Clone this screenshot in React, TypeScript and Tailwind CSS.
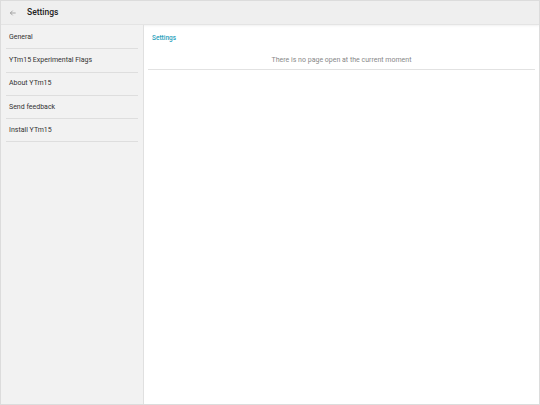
import React from 'react';

const items = ['General', 'YTm15 Experimental Flags', 'About YTm15', 'Send feedback', 'Install YTm15'];

const App = () => {
  return (
    <div className="w-[540px] h-[405px] flex flex-col border border-[#dcdcdc] bg-white overflow-hidden" style={{ fontFamily: 'Roboto, "Liberation Sans", sans-serif' }}>
      {/* header */}
      <div className="h-[24px] flex-shrink-0 flex items-center bg-[#efefef] border-b border-[#e4e4e4] shadow-[0_1px_2px_rgba(0,0,0,0.06)]">
        <svg width="8" height="8" viewBox="0 0 24 24" className="ml-[8px] text-[#777]" fill="none" stroke="currentColor" strokeWidth="1.8">
          <path d="M20 12H4M11 5l-7 7 7 7" />
        </svg>
        <span className="ml-[10px] text-[8.5px] font-medium text-[#222]">Settings</span>
      </div>

      <div className="flex flex-1 min-h-0">
        {/* sidebar */}
        <div className="w-[143px] flex-shrink-0 bg-[#f2f2f2] border-r border-[#e0e0e0] px-[5px] pt-[1px]">
          {items.map(label => (
            <div key={label} className="h-[23.25px] flex items-center pl-[3px] border-b border-[#dedede] text-[7px] text-[#333]">
              {label}
            </div>
          ))}
        </div>

        {/* main */}
        <div className="flex-1 px-[4px] pt-[8px]">
          <div className="pl-[4px] text-[6.5px] font-medium text-[#2a9fbc] leading-[10px]">Settings</div>
          <div className="mt-[10px] h-[17px] flex items-center justify-center pb-[1px] text-[7px] text-[#888] border-b border-[#e2e2e2]">
            There is no page open at the current moment
          </div>
        </div>
      </div>
    </div>
  );
};

export default App;
